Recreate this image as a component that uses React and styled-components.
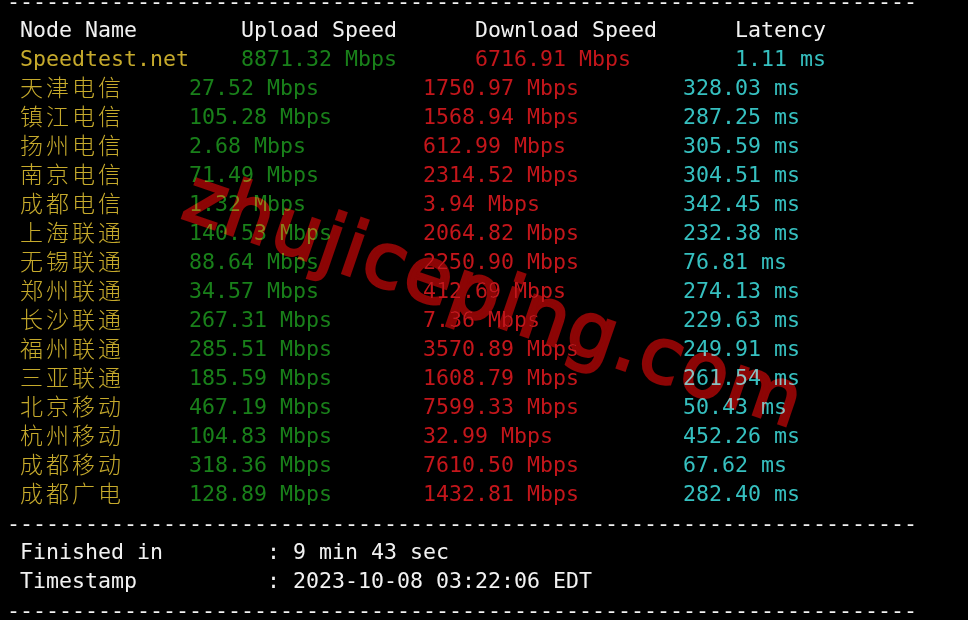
import styled, { createGlobalStyle } from 'styled-components'

const CH = 13

const GlobalStyle = createGlobalStyle`
  html, body {
    margin: 0;
    background: #000;
  }
  body {
    width: 968px;
    height: 620px;
    overflow: hidden;
  }
`

const Terminal = styled.div`
  position: relative;
  margin-top: -14px;
  padding-left: 7px;
  font-family: "DejaVu Sans Mono", "Noto Sans CJK SC", monospace;
  font-size: 21.6px;
  line-height: 29px;
  color: #f2f2f2;
`

const Line = styled.div`
  display: flex;
  height: 29px;
  white-space: pre;
`

const Cell = styled.span`
  flex: none;
  width: ${props => props.cols * CH}px;
  color: ${props => props.color || '#f2f2f2'};
  white-space: pre;
`

const Han = styled.span`
  display: inline-block;
  font-family: "Noto Sans CJK SC", sans-serif;
  font-size: 23px;
  font-weight: 300;
  line-height: 29px;
  letter-spacing: 3px;
  vertical-align: top;
  margin-top: -1px;
`

const Rule = styled.div`
  box-sizing: border-box;
  height: 29px;
  padding-top: 1px;
  white-space: pre;
  color: #f2f2f2;
`

const Watermark = styled.div`
  position: absolute;
  left: 495px;
  top: 312px;
  transform: translate(-50%, -50%) rotate(19deg);
  font-family: "DejaVu Sans", sans-serif;
  font-size: 76px;
  line-height: 1;
  letter-spacing: 2px;
  color: #8c0505;
  -webkit-text-stroke: 3px #8c0505;
  white-space: nowrap;
  mix-blend-mode: lighten;
  pointer-events: none;
`

const YELLOW = '#c6aa2c'
const GREEN = '#19801a'
const RED = '#c4161b'
const CYAN = '#36c0c0'

const rows = [
  ['天津电信', '27.52 Mbps', '1750.97 Mbps', '328.03 ms'],
  ['镇江电信', '105.28 Mbps', '1568.94 Mbps', '287.25 ms'],
  ['扬州电信', '2.68 Mbps', '612.99 Mbps', '305.59 ms'],
  ['南京电信', '71.49 Mbps', '2314.52 Mbps', '304.51 ms'],
  ['成都电信', '1.32 Mbps', '3.94 Mbps', '342.45 ms'],
  ['上海联通', '140.53 Mbps', '2064.82 Mbps', '232.38 ms'],
  ['无锡联通', '88.64 Mbps', '2250.90 Mbps', '76.81 ms'],
  ['郑州联通', '34.57 Mbps', '412.69 Mbps', '274.13 ms'],
  ['长沙联通', '267.31 Mbps', '7.36 Mbps', '229.63 ms'],
  ['福州联通', '285.51 Mbps', '3570.89 Mbps', '249.91 ms'],
  ['三亚联通', '185.59 Mbps', '1608.79 Mbps', '261.54 ms'],
  ['北京移动', '467.19 Mbps', '7599.33 Mbps', '50.43 ms'],
  ['杭州移动', '104.83 Mbps', '32.99 Mbps', '452.26 ms'],
  ['成都移动', '318.36 Mbps', '7610.50 Mbps', '67.62 ms'],
  ['成都广电', '128.89 Mbps', '1432.81 Mbps', '282.40 ms'],
]

const dashes = '-'.repeat(70)

function App() {
  return (
    <>
      <GlobalStyle />
      <Terminal>
        <Rule>{dashes}</Rule>
        <Line>
          <Cell cols={18}> Node Name</Cell>
          <Cell cols={18}>Upload Speed</Cell>
          <Cell cols={20}>Download Speed</Cell>
          <Cell cols={12}>Latency</Cell>
        </Line>
        <Line>
          <Cell cols={18} color={YELLOW}> Speedtest.net</Cell>
          <Cell cols={18} color={GREEN}>8871.32 Mbps</Cell>
          <Cell cols={20} color={RED}>6716.91 Mbps</Cell>
          <Cell cols={12} color={CYAN}>1.11 ms</Cell>
        </Line>
        {rows.map(([name, up, down, lat]) => (
          <Line key={name + up}>
            <Cell cols={14} color={YELLOW}> <Han>{name}</Han></Cell>
            <Cell cols={18} color={GREEN}>{up}</Cell>
            <Cell cols={20} color={RED}>{down}</Cell>
            <Cell cols={12} color={CYAN}>{lat}</Cell>
          </Line>
        ))}
        <Rule>{dashes}</Rule>
        <Line>
          <Cell cols={20}> Finished in</Cell>
          <Cell cols={40}>: 9 min 43 sec</Cell>
        </Line>
        <Line>
          <Cell cols={20}> Timestamp</Cell>
          <Cell cols={40}>: 2023-10-08 03:22:06 EDT</Cell>
        </Line>
        <Rule>{dashes}</Rule>
        <Watermark>zhujiceping.com</Watermark>
      </Terminal>
    </>
  )
}

export default App
